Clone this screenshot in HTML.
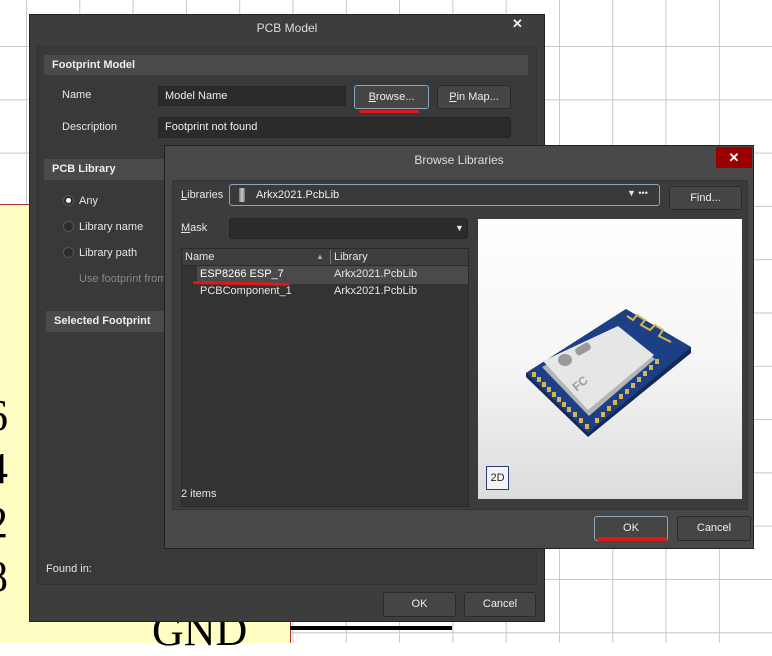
<!DOCTYPE html>
<html><head><meta charset="utf-8"><style>
*{box-sizing:border-box;margin:0;padding:0}
body{width:772px;height:643px;position:relative;overflow:hidden;background:#fff;font-family:"Liberation Sans",sans-serif;font-size:11px;color:#e6e6e6}
.a{position:absolute}
.bg{background-image:linear-gradient(90deg,#c8c8c8 1px,transparent 1px),linear-gradient(#c8c8c8 1px,transparent 1px);background-size:53.3px 53.3px;background-position:26px 46px;inset:0}
.btn{position:absolute;background:#454545;border:1px solid #2a2a2a;border-radius:3px;color:#eee;text-align:center;font-size:11px}
.inp{position:absolute;background:#2b2b2b;border:1px solid #242424;border-radius:3px;color:#eee;padding-left:6px;font-size:11px}
.hd{position:absolute;background:#4a4a4a;font-weight:bold;color:#eee;padding-left:8px;font-size:11px}
.rad{position:absolute;width:11px;height:11px;border-radius:50%;background:#2c2c2c;border:1px solid #555}
.num{position:absolute;font-family:"Liberation Serif",serif;font-size:44px;color:#000}
</style></head><body>
<div class="a bg"></div>
<div class="a" style="left:0;top:204px;width:291px;height:439px;background:#ffffc4;border-top:1px solid #a33"></div>
<div class="a" style="left:290px;top:204px;width:1px;height:439px;background:#a33"></div>
<div class="num" style="left:-14px;top:390px">6</div>
<div class="num" style="left:-14px;top:443px">4</div>
<div class="num" style="left:-14px;top:497px">2</div>
<div class="num" style="left:-14px;top:551px">8</div>
<div class="num" style="left:152px;top:605px">GND</div>
<div class="a" style="left:290px;top:626px;width:162px;height:4px;background:#000"></div>

<!-- PCB Model -->
<div class="a" style="left:29px;top:14px;width:516px;height:608px;background:#3d3d3d;border:1px solid #222"></div>
<div class="a" style="left:29px;top:21px;width:516px;text-align:center;font-size:12px;color:#ddd">PCB Model</div>
<div class="a" style="left:512px;top:16px;font-size:13px;font-weight:bold;color:#eee">✕</div>
<div class="a" style="left:37px;top:46px;width:500px;height:539px;background:#393939;border:1px solid #333"></div>
<div class="hd" style="left:44px;top:55px;width:484px;height:20px;line-height:20px">Footprint Model</div>
<div class="a" style="left:62px;top:89px">Name</div>
<div class="inp" style="left:158px;top:86px;width:188px;height:20px;line-height:18px">Model Name</div>
<div class="btn" style="left:354px;top:85px;width:75px;height:24px;line-height:22px;border-color:#8aa6bf"><u>B</u>rowse...</div>
<div class="a" style="left:359px;top:110px;width:60px;height:3px;background:#e01818;border-radius:2px"></div>
<div class="btn" style="left:437px;top:85px;width:74px;height:24px;line-height:22px"><u>P</u>in Map...</div>
<div class="a" style="left:62px;top:121px">Description</div>
<div class="inp" style="left:158px;top:117px;width:353px;height:21px;line-height:19px">Footprint not found</div>
<div class="hd" style="left:44px;top:159px;width:484px;height:21px;line-height:21px">PCB Library</div>
<div class="rad" style="left:63px;top:195px"><div style="width:5px;height:5px;background:#fff;border-radius:50%;margin:2px"></div></div>
<div class="a" style="left:79px;top:195px">Any</div>
<div class="rad" style="left:63px;top:221px"></div><div class="a" style="left:79px;top:221px">Library name</div>
<div class="rad" style="left:63px;top:247px"></div><div class="a" style="left:79px;top:247px">Library path</div>
<div class="a" style="left:79px;top:273px;color:#888">Use footprint from</div>
<div class="hd" style="left:46px;top:311px;width:484px;height:21px;line-height:21px">Selected Footprint</div>
<div class="a" style="left:46px;top:563px">Found in:</div>
<div class="btn" style="left:383px;top:592px;width:73px;height:25px;line-height:23px">OK</div>
<div class="btn" style="left:464px;top:592px;width:72px;height:25px;line-height:23px">Cancel</div>

<!-- Browse Libraries -->
<div class="a" style="left:164px;top:145px;width:590px;height:404px;background:#484848;border:1px solid #222"></div>
<div class="a" style="left:164px;top:153px;width:590px;text-align:center;font-size:12px;color:#ddd">Browse Libraries</div>
<div class="a" style="left:716px;top:147px;width:36px;height:21px;background:#9a0000;color:#fff;text-align:center;line-height:21px;font-size:13px;font-weight:bold">✕</div>
<div class="a" style="left:172px;top:180px;width:576px;height:330px;background:#3c3c3c;border:1px solid #333"></div>
<div class="a" style="left:181px;top:189px"><u>L</u>ibraries</div>
<div class="inp" style="left:229px;top:184px;width:431px;height:22px;line-height:20px;border-color:#8aa6bf;background:#3a3a3a;padding-left:26px">Arkx2021.PcbLib</div>
<div class="a" style="left:239px;top:188px;width:6px;height:14px;background:linear-gradient(90deg,#777,#ccc,#777)"></div>
<div class="a" style="left:627px;top:188px;font-size:9px">▼ •••</div>
<div class="btn" style="left:669px;top:186px;width:73px;height:24px;line-height:22px">Find...</div>
<div class="a" style="left:181px;top:222px"><u>M</u>ask</div>
<div class="inp" style="left:229px;top:218px;width:239px;height:21px"></div>
<div class="a" style="left:455px;top:223px;font-size:9px">▼</div>
<div class="a" style="left:181px;top:248px;width:288px;height:259px;background:#333;border:1px solid #2a2a2a"></div>
<div class="a" style="left:182px;top:249px;width:286px;height:17px;background:#3e3e3e;border-bottom:1px solid #2a2a2a"></div>
<div class="a" style="left:185px;top:251px">Name</div>
<div class="a" style="left:316px;top:252px;font-size:8px;color:#aaa">▲</div>
<div class="a" style="left:330px;top:250px;width:1px;height:14px;background:#777"></div>
<div class="a" style="left:334px;top:251px">Library</div>
<div class="a" style="left:197px;top:266px;width:271px;height:18px;background:#4a4a4a"></div>
<div class="a" style="left:200px;top:268px;color:#fff">ESP8266 ESP_7</div>
<div class="a" style="left:334px;top:268px">Arkx2021.PcbLib</div>
<div class="a" style="left:193px;top:282px;width:97px;height:3px;background:#e01818;border-radius:2px;transform:rotate(1deg)"></div>
<div class="a" style="left:200px;top:285px">PCBComponent_1</div>
<div class="a" style="left:334px;top:285px">Arkx2021.PcbLib</div>
<div class="a" style="left:181px;top:488px">2 items</div>
<div class="a" style="left:478px;top:219px;width:264px;height:280px;background:linear-gradient(#fff,#f6f6f6 50%,#dcdcdc)"></div>
<svg class="a" style="left:478px;top:219px" width="264" height="280" viewBox="478 219 264 280">
<polygon points="626,309 691,347 691,353 588,437 526,377 526,373" fill="#13295a"/>
<polygon points="626,309 691,347 588,433 526,373" fill="#1d3f85"/>
<g stroke="#d8b84a" stroke-width="2" fill="none"><polyline points="627,316 633,320 637,315 645,320 641,325 650,330 655,325 663,330 659,336 671,342"/></g>
<g fill="#d9b64c">
<rect x="532" y="372" width="4" height="5"/><rect x="537" y="377" width="4" height="5"/><rect x="542" y="382" width="4" height="5"/><rect x="547" y="387" width="4" height="5"/><rect x="552" y="392" width="4" height="5"/><rect x="557" y="397" width="4" height="5"/><rect x="562" y="402" width="4" height="5"/><rect x="567" y="407" width="4" height="5"/><rect x="573" y="412" width="4" height="5"/><rect x="579" y="418" width="4" height="5"/><rect x="585" y="424" width="4" height="5"/>
<rect x="595" y="418" width="4" height="5"/><rect x="601" y="412" width="4" height="5"/><rect x="607" y="406" width="4" height="5"/><rect x="613" y="400" width="4" height="5"/><rect x="619" y="394" width="4" height="5"/><rect x="625" y="389" width="4" height="5"/><rect x="631" y="383" width="4" height="5"/><rect x="637" y="377" width="4" height="5"/><rect x="643" y="371" width="4" height="5"/><rect x="649" y="365" width="4" height="5"/><rect x="655" y="359" width="4" height="5"/></g>
<polygon points="618,329 655,359 589,416 542,367" fill="#b5b5b5"/>
<polygon points="618,326 654,355 588,410 543,361" fill="#e6e6e6"/>
<g fill="#9a9a9a"><ellipse cx="565" cy="360" rx="7" ry="6"/><rect x="575" y="345" width="16" height="8" rx="3" transform="rotate(-30 583 349)"/><text x="573" y="388" font-size="12" font-weight="bold" transform="rotate(-40 580 385)">FC</text></g>
</svg>
<div class="a" style="left:486px;top:466px;width:23px;height:24px;border:1px solid #2a3f7a;background:#f4f4f4;color:#222;text-align:center;line-height:22px;font-size:11px">2D</div>
<div class="btn" style="left:594px;top:516px;width:74px;height:25px;line-height:23px;border-color:#8aa6bf">OK</div>
<div class="a" style="left:597px;top:537px;width:70px;height:4px;background:#e01818;border-radius:2px"></div>
<div class="btn" style="left:677px;top:516px;width:74px;height:25px;line-height:23px">Cancel</div>
</body></html>
